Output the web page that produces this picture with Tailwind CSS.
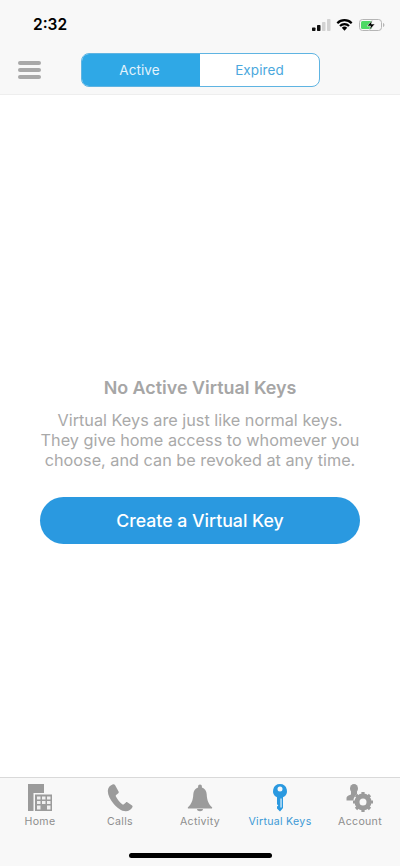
<!DOCTYPE html>
<html lang="en">
<head>
    <meta charset="UTF-8">
    <meta name="viewport" content="width=device-width, initial-scale=1.0">
    <title>Virtual Keys</title>
    <script src="https://cdn.jsdelivr.net/npm/@tailwindcss/browser@4"></script>
</head>
<body class="bg-white font-['Inter',sans-serif]">
    <div class="w-[400px] h-[866px] flex flex-col overflow-hidden">
        <!-- Status bar + header -->
        <header class="h-[95px] bg-[#f8f8f8] border-b border-[#eeeeee] shrink-0">
            <div class="h-[49px] flex items-center justify-between pl-[33px] pr-[15px] mb-[4px]">
                <span class="text-[15.5px] leading-none font-semibold text-black">2:32</span>
                <div class="flex items-center">
                    <svg width="19" height="12" viewBox="0 0 19 12">
                        <rect x="0" y="8.500" width="3.500" height="3.500" rx="0.700" fill="#111"/>
                        <rect x="5" y="6" width="3.500" height="6" rx="0.700" fill="#111"/>
                        <rect x="10" y="3" width="3.500" height="9" rx="0.700" fill="#d2d2d2"/>
                        <rect x="15" y="0" width="3.500" height="12" rx="0.700" fill="#d2d2d2"/>
                    </svg>
                    <svg class="ml-[5px]" width="17" height="12" viewBox="0 0 17 12">
                        <path d="M1.300 4.200A10.200 10.200 0 0 1 15.700 4.200" fill="none" stroke="#000" stroke-width="2.200"/>
                        <path d="M4 7A6.400 6.400 0 0 1 13 7" fill="none" stroke="#000" stroke-width="2.200"/>
                        <path d="M5.800 8.800a3.800 3.800 0 0 1 5.400 0L8.500 11.800z" fill="#000"/>
                    </svg>
                    <svg class="ml-[6px]" width="26" height="12" viewBox="0 0 26 12">
                        <rect x="0.500" y="0.500" width="22" height="11" rx="3" fill="none" stroke="#b5b5b5"/>
                        <rect x="2" y="2" width="11" height="8" rx="1.500" fill="#4cd964"/>
                        <path d="M24 4c.9.300 1.400 1 1.400 2s-.5 1.700-1.400 2z" fill="#b5b5b5"/>
                        <path d="M13.500 1L8 7h3.600l-1.400 4.500L16 5h-3.700z" fill="#000" stroke="#f8f8f8" stroke-width="0.600"/>
                    </svg>
                </div>
            </div>
            <div class="flex items-center pl-[18px]">
                <div class="w-[23px] flex flex-col gap-[3px]">
                    <div class="h-[4px] rounded-full bg-[#a8a8a8]"></div>
                    <div class="h-[4px] rounded-full bg-[#a8a8a8]"></div>
                    <div class="h-[4px] rounded-full bg-[#a8a8a8]"></div>
                </div>
                <div class="ml-[40px] w-[239px] h-[34px] flex rounded-[8px] border border-[#5fb4e2] bg-white overflow-hidden text-[13.500px] tracking-[0.1px]">
                    <div class="w-[118px] pr-[3px] bg-[#2fa8e6] text-[#e3f3fc] flex items-center justify-center">Active</div>
                    <div class="flex-1 text-[#4ba8dd] flex items-center justify-center">Expired</div>
                </div>
            </div>
        </header>

        <!-- Empty state -->
        <main class="flex-1 bg-white flex flex-col items-center pt-[282px]">
            <h2 class="text-[17.900px] leading-[22px] font-semibold text-[#a6a6a6]">No Active Virtual Keys</h2>
            <p class="mt-[11px] text-[16.250px] leading-[20px] text-[#a9a9a9] text-center whitespace-nowrap">Virtual Keys are just like normal keys.<br>They give home access to whomever you<br>choose, and can be revoked at any time.</p>
            <button class="mt-[27px] pt-[1px] w-[320px] h-[47px] rounded-full bg-[#2a99e0] text-white text-[17.700px] font-medium">Create a Virtual Key</button>
        </main>

        <!-- Tab bar -->
        <nav class="h-[89px] shrink-0 bg-[#f8f8f8] border-t border-[#d9d9d9] relative">
            <div class="grid grid-cols-5 pt-[6px] text-[10.600px] leading-[14px] tracking-[0.3px] text-[#8e8e8e]">
                <div class="flex flex-col items-center">
                    <svg class="h-[28px]" width="24" height="28" viewBox="0 0 24 28">
                        <path d="M0 0h16v27H0z" fill="#9b9b9b"/>
                        <path d="M5.500 9h18.500v18H5.500z" fill="#f8f8f8"/>
                        <path d="M7 10.500h17V27H7z" fill="#9b9b9b"/>
                        <g fill="#f0f0f0">
                            <rect x="9" y="12.500" width="3.500" height="3"/><rect x="14" y="12.500" width="3.500" height="3"/><rect x="19" y="12.500" width="3.500" height="3"/>
                            <rect x="9" y="17" width="3.500" height="3"/><rect x="14" y="17" width="3.500" height="3"/><rect x="19" y="17" width="3.500" height="3"/>
                            <rect x="9" y="21.500" width="3.500" height="4"/><rect x="19" y="21.500" width="3.500" height="4"/>
                        </g>
                    </svg>
                    <span class="mt-[3px]">Home</span>
                </div>
                <div class="flex flex-col items-center">
                    <svg class="h-[28px]" width="26" height="28" viewBox="0 0 26 28">
                        <path d="M5.500 0.500C3 1.500 0.800 3.500 0.800 7c0 4 2.500 9 6 13 3.500 4 7.500 7.200 12 7.200 3 0 5.500-1.800 6.700-4.200.3-.6.100-1.100-.4-1.500l-4.800-3.200c-.5-.3-1-.3-1.400.1l-2 1.900c-.4.400-.9.400-1.400.1-2.800-2-5.200-5-6.700-8.200-.2-.5-.1-1 .3-1.300l2.200-1.700c.5-.3.600-.9.400-1.400L8 1c-.4-.6-1.500-.9-2.500-.5z" fill="#9b9b9b"/>
                    </svg>
                    <span class="mt-[3px]">Calls</span>
                </div>
                <div class="flex flex-col items-center">
                    <svg class="h-[28px]" width="26" height="28" viewBox="0 0 26 28">
                        <path d="M13 0.500c1.200 0 1.900.9 1.900 2v1c3 .9 4.600 3.500 4.800 6.800.3 6 1.800 9.700 5.300 12.900.5.500.2 1.300-.5 1.300H1.500c-.7 0-1-.8-.5-1.300 3.500-3.200 5-6.900 5.300-12.900.2-3.300 1.800-5.900 4.800-6.800v-1c0-1.100.7-2 1.900-2z" fill="#9b9b9b"/>
                        <path d="M10 25h6c0 1.300-1.300 2.300-3 2.300s-3-1-3-2.300z" fill="#9b9b9b"/>
                    </svg>
                    <span class="mt-[3px]">Activity</span>
                </div>
                <div class="flex flex-col items-center text-[#3d9ad6]">
                    <svg class="h-[28px]" width="16" height="28" viewBox="0 0 16 28">
                        <path fill-rule="evenodd" d="M8 0a7 7 0 0 1 3 13.300V24l-3 3.500-3-3v-2l1.300-1L5 20.300v-7A7 7 0 0 1 8 0zm0 2.500a2.500 2.500 0 1 0 0 5 2.500 2.500 0 0 0 0-5z" fill="#2a99e0"/>
                        <path d="M8.400 14.500h1.300v9H8.400z" fill="#d8edf9"/>
                    </svg>
                    <span class="mt-[3px]">Virtual Keys</span>
                </div>
                <div class="flex flex-col items-center">
                    <svg class="h-[28px]" width="28" height="28" viewBox="0 0 28 28">
                        <ellipse cx="8" cy="4.500" rx="4" ry="4.500" fill="#9b9b9b"/>
                        <path d="M5 7h6v3.500l6 2v4H0.500v-2.500c0-1.300 1-2 2-2.500L5 10.500z" fill="#9b9b9b"/>
                        <circle cx="17" cy="18" r="10" fill="#f8f8f8"/>
                        <circle cx="17" cy="18" r="6" fill="none" stroke="#9b9b9b" stroke-width="5"/>
                        <g stroke="#9b9b9b" stroke-width="3.200">
                            <path d="M17 8v3M17 25v3M7 18h3M24 18h3M10 11l2.100 2.100M21.900 22.900L24 25M10 25l2.100-2.100M21.900 13.100L24 11"/>
                        </g>
                    </svg>
                    <span class="mt-[3px]">Account</span>
                </div>
            </div>
            <div class="absolute left-[129px] bottom-[8px] w-[143px] h-[5px] rounded-full bg-black"></div>
        </nav>
    </div>
</body>
</html>
